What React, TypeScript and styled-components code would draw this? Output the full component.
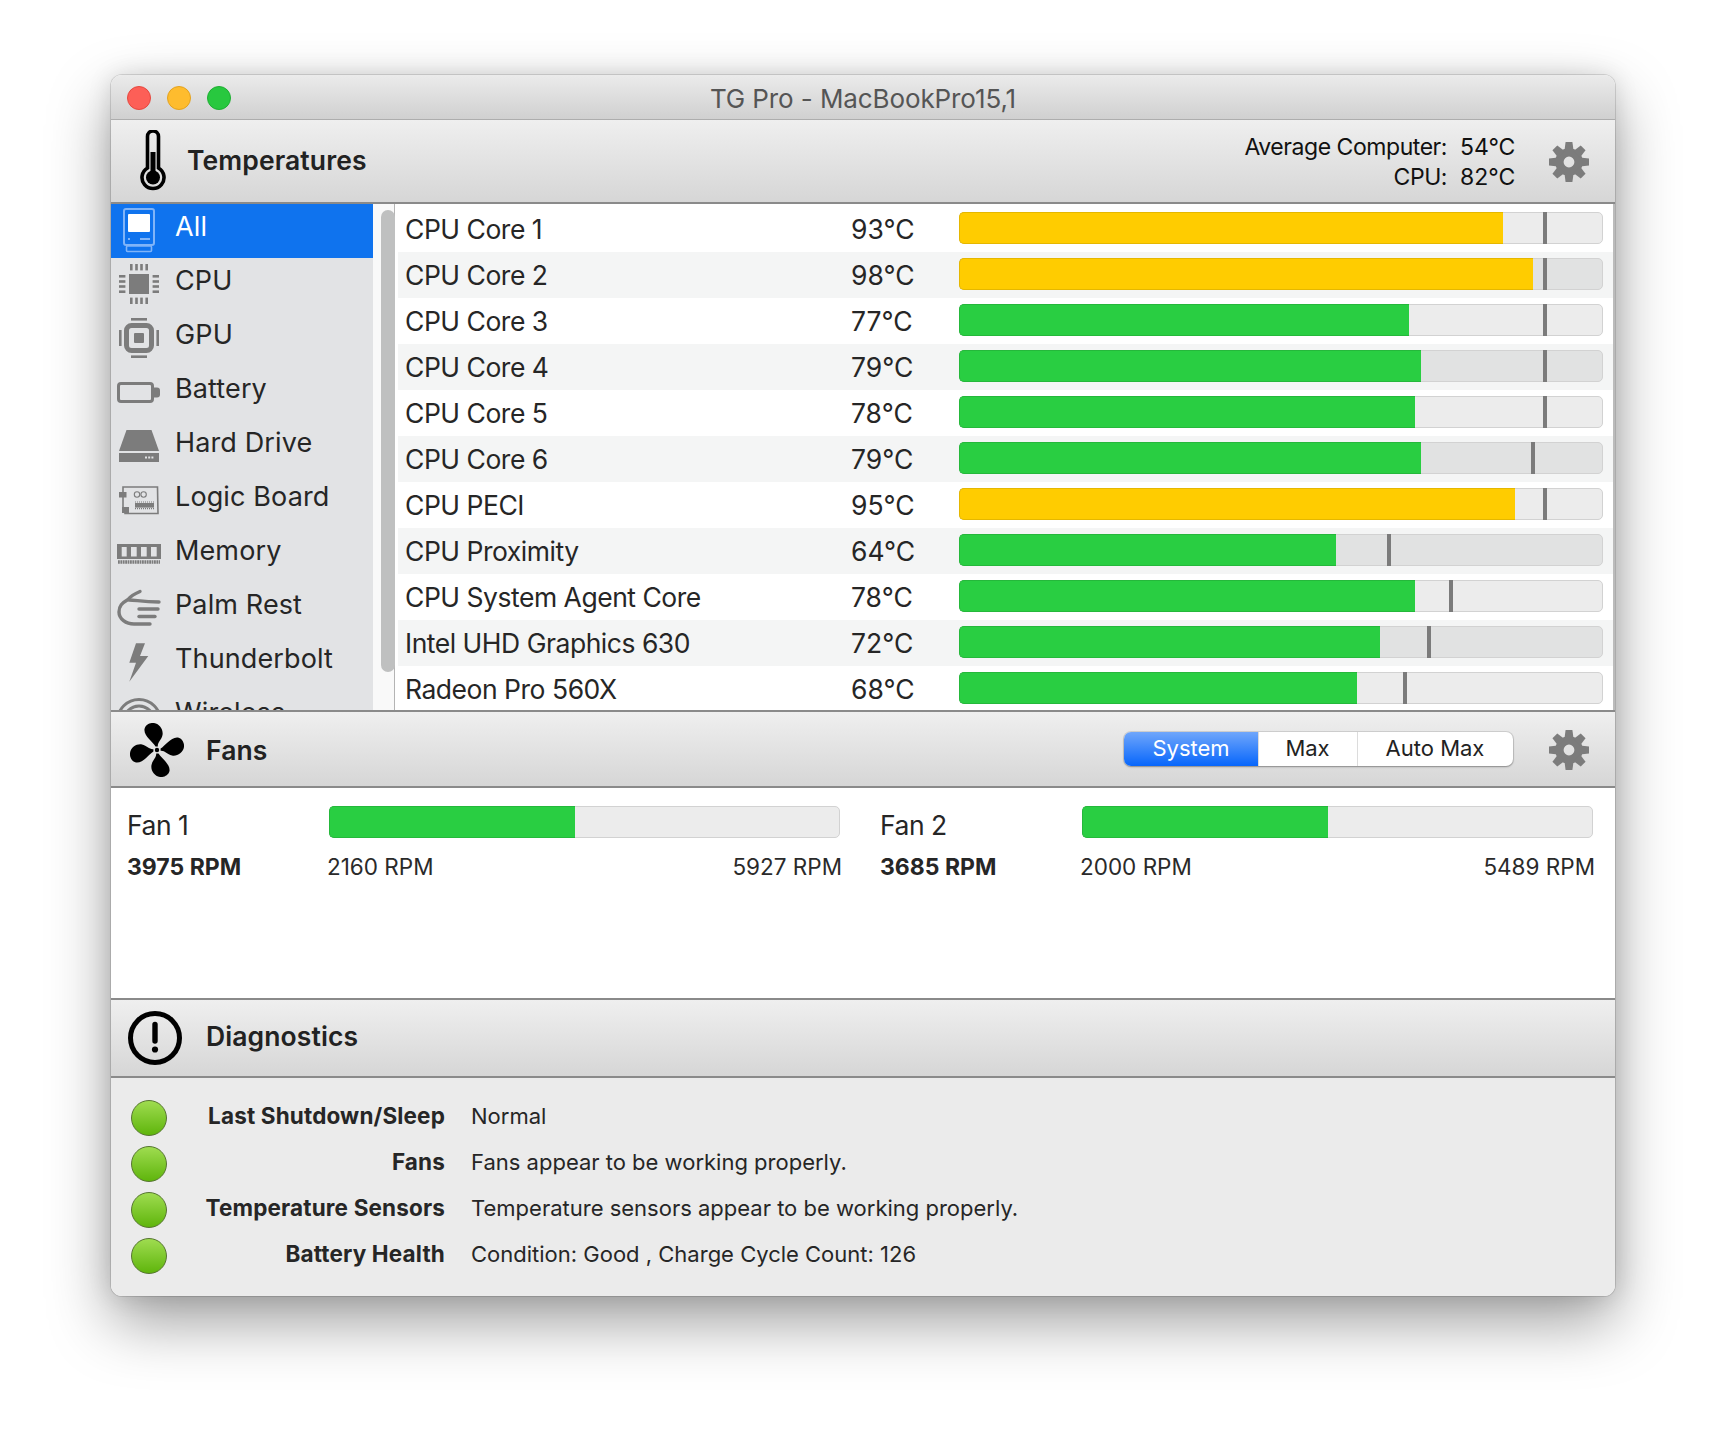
import React from 'react';
import styled, { createGlobalStyle } from 'styled-components';

const BASE_FONT = '"Inter", "Noto Sans", "Liberation Sans", sans-serif';
const ICON_GREY = '#7c7c7c';
const HEADER_LINE = '#8a8a8a';
const BAR_LEFT = 959;

const GlobalStyle = createGlobalStyle`
  html, body {
    margin: 0;
    padding: 0;
    background: #fff;
  }
  body {
    font-family: ${BASE_FONT};
    color: #242424;
    -webkit-font-smoothing: antialiased;
  }
`;

const Page = styled.div`
  width: 1726px;
  height: 1444px;
  box-sizing: border-box;
  padding: 75px 0 0 111px;
  overflow: hidden;
`;

const Window = styled.div`
  width: 1504px;
  height: 1221px;
  border-radius: 11px;
  overflow: hidden;
  display: flex;
  flex-direction: column;
  box-shadow: 0 0 0 1px rgba(0, 0, 0, 0.12), 0 26px 62px rgba(0, 0, 0, 0.38), 0 0 24px rgba(0, 0, 0, 0.12);
`;

const TitleBar = styled.div`
  height: 45px;
  box-sizing: border-box;
  flex: none;
  display: flex;
  align-items: center;
  position: relative;
  padding: 2px 0 0 16px;
  gap: 16px;
  background: linear-gradient(#ebebeb, #d0d0d0);
  border-bottom: 1px solid #adadad;
`;

const Light = styled.span<{ $color: string; $edge: string }>`
  width: 24px;
  height: 24px;
  box-sizing: border-box;
  border-radius: 50%;
  background: ${(p) => p.$color};
  border: 1px solid ${(p) => p.$edge};
`;

const WindowTitle = styled.div`
  position: absolute;
  left: 0;
  right: 0;
  top: 8px;
  text-align: center;
  font-size: 26px;
  line-height: 32px;
  letter-spacing: -0.1px;
  color: #555;
`;

const SectionHeader = styled.div<{ $height: number; $top?: boolean }>`
  height: ${(p) => p.$height}px;
  box-sizing: border-box;
  flex: none;
  display: flex;
  align-items: center;
  background: linear-gradient(#efefef, #d6d6d6);
  border-bottom: 2px solid ${HEADER_LINE};
  ${(p) => p.$top && `border-top: 2px solid ${HEADER_LINE};`}
`;

const HeaderIcon = styled.div<{ $width: number; $left: number; $down?: number }>`
  width: ${(p) => p.$width}px;
  margin-left: ${(p) => p.$left}px;
  margin-top: ${(p) => p.$down || 0}px;
  display: flex;
  flex: none;
`;

const SectionTitle = styled.div<{ $left: number; $up?: number; $down?: number }>`
  margin-left: ${(p) => p.$left}px;
  margin-bottom: ${(p) => p.$up || 0}px;
  margin-top: ${(p) => p.$down || 0}px;
  font-size: 26.5px;
  font-weight: 600;
  letter-spacing: 0.1px;
  color: #222;
`;

const Summary = styled.div`
  margin-left: auto;
  display: grid;
  grid-template-columns: auto auto;
  column-gap: 13px;
  justify-items: end;
  font-size: 23px;
  line-height: 30px;
  color: #111;
  margin-top: 2px;
`;

const SummaryLabel = styled.span`
  letter-spacing: -0.45px;
`;

const SummaryValue = styled.span`
  width: 52px;
  justify-self: start;
`;

const GearSlot = styled.div<{ $left: number; $down?: number }>`
  margin-left: ${(p) => p.$left}px;
  margin-right: 26px;
  margin-top: ${(p) => p.$down || 0}px;
  display: flex;
`;

const TempBody = styled.div`
  height: 506px;
  flex: none;
  display: flex;
  background: #fff;
  overflow: hidden;
`;

const Sidebar = styled.div`
  width: 262px;
  flex: none;
  background: #e2e3e5;
  overflow: hidden;
`;

const SideRow = styled.div<{ $active?: boolean }>`
  height: 54px;
  display: flex;
  align-items: flex-start;
  padding-left: 5px;
  gap: 13px;
  font-size: 27px;
  background: ${(p) => (p.$active ? '#0f73ee' : 'transparent')};
  color: ${(p) => (p.$active ? '#fff' : '#262626')};
`;

const SideIcon = styled.div`
  width: 46px;
  height: 46px;
  flex: none;
  margin-top: 3px;
`;

const SideLabel = styled.span`
  line-height: 46px;
  letter-spacing: 0.12px;
`;

const ScrollStrip = styled.div`
  width: 22px;
  flex: none;
  box-sizing: border-box;
  padding: 6px 0 0 8px;
  background: #f9f9f9;
  border-right: 1px solid #b4b4b4;
`;

const ScrollThumb = styled.div`
  width: 14px;
  height: 462px;
  border-radius: 7px;
  background: #bfc0c0;
`;

const Table = styled.div`
  flex: 1;
  padding: 2px 0 0 3px;
  border-right: 2px solid #bbb;
`;

const TempRow = styled.div`
  height: 46px;
  display: grid;
  grid-template-columns: 446px 108px 644px;
  padding-left: 7px;
  font-size: 26.5px;
  line-height: 46px;
  color: #262626;
  &:nth-child(even) {
    background: #f4f5f5;
  }
`;

const SensorName = styled.span`
  letter-spacing: -0.48px;
`;

const Track = styled.div<{ $flush?: boolean }>`
  position: relative;
  height: 32px;
  margin-top: ${(p) => (p.$flush ? 0 : 6)}px;
  box-sizing: border-box;
  background: rgba(0, 0, 0, 0.075);
  border: 1px solid #d2d2d2;
  border-radius: 5px;
`;

const Fill = styled.div<{ $hot?: boolean }>`
  position: absolute;
  left: -1px;
  top: -1px;
  bottom: -1px;
  box-sizing: border-box;
  background: ${(p) => (p.$hot ? '#ffcc00' : '#29ce42')};
  border: 1px solid ${(p) => (p.$hot ? '#e5b700' : '#25b83b')};
  border-right: none;
  border-radius: 5px 0 0 5px;
`;

const Mark = styled.div`
  position: absolute;
  top: -1px;
  bottom: -1px;
  width: 4px;
  background: #7b7b7b;
`;

const FanBody = styled.div`
  height: 210px;
  flex: none;
  box-sizing: border-box;
  background: #fff;
  padding: 18px 0 0 16px;
  display: grid;
  grid-template-columns: 753px 715px;
  align-items: start;
`;

const FanPanel = styled.div`
  width: 715px;
  display: grid;
  grid-template-columns: 202px 1fr;
`;

const FanName = styled.div`
  font-size: 26.5px;
  line-height: 38px;
  letter-spacing: -0.48px;
  color: #262626;
`;

const FanBar = styled.div`
  margin-right: 2px;
`;

const FanSpeed = styled.div`
  font-size: 23px;
  font-weight: 700;
  line-height: 36px;
  margin-top: 5px;
  color: #262626;
`;

const FanRange = styled.div`
  display: flex;
  justify-content: space-between;
  font-size: 22.5px;
  line-height: 36px;
  margin: 5px 0 0 -2px;
  color: #2a2a2a;
`;

const Segments = styled.div`
  margin-left: auto;
  display: flex;
  height: 34px;
  width: 389px;
  border-radius: 7px;
  overflow: hidden;
  background: #fff;
  box-shadow: 0 0 0 1px rgba(0, 0, 0, 0.1), 0 1px 2px rgba(0, 0, 0, 0.3);
  font-size: 22px;
  line-height: 32px;
  text-align: center;
`;

const Segment = styled.div<{ $width: number; $active?: boolean }>`
  width: ${(p) => p.$width}px;
  flex: none;
  color: ${(p) => (p.$active ? '#fff' : '#222')};
  background: ${(p) => (p.$active ? 'linear-gradient(#6fa6fb, #0766fb)' : 'transparent')};
  & + & {
    box-shadow: inset 1px 0 0 #dcdcdc;
  }
`;

const DiagBody = styled.div`
  flex: 1;
  box-sizing: border-box;
  background: #ebebeb;
  padding: 22px 0 0 20px;
`;

const DiagRow = styled.div`
  display: grid;
  grid-template-columns: 36px 278px 1fr;
  height: 46px;
  font-size: 22px;
  line-height: 32px;
  color: #262626;
`;

const Led = styled.div`
  width: 36px;
  height: 36px;
  box-sizing: border-box;
  border-radius: 50%;
  border: 1px solid #55752f;
  background: linear-gradient(#9fdc50, #5fb50c);
`;

const DiagLabel = styled.div`
  font-size: 22.5px;
  font-weight: 700;
  letter-spacing: 0.15px;
  text-align: right;
`;

const DiagValue = styled.div`
  margin-left: 26px;
`;

function Gear() {
  return (
    <svg width="40" height="40" viewBox="-20 -20 40 40">
      <circle r="9.6" fill="none" stroke={ICON_GREY} strokeWidth="8.4" />
      {[0, 45, 90, 135, 180, 225, 270, 315].map((a) => (
        <path key={a} d="M-3.4,-20 H3.4 L4.6,-11 H-4.6 Z" fill={ICON_GREY} transform={`rotate(${a})`} />
      ))}
    </svg>
  );
}

function Thermometer() {
  return (
    <svg width="26" height="62" viewBox="0 0 26 62">
      <path
        d="M7.5,38 V6.5 a5.5,5.5 0 0 1 11,0 V38 a11,11 0 1 1 -11,0 Z"
        fill="none"
        stroke="#000"
        strokeWidth="3.6"
      />
      <rect x="10.5" y="22" width="5" height="24" fill="#000" />
      <circle cx="13" cy="47.5" r="7" fill="#000" />
    </svg>
  );
}

function FanGlyph() {
  const blade =
    'M-1.5,-3.6 C-4,-8 -13.5,-14 -12.5,-21 C-11.5,-25.5 -6.5,-27.5 -3,-27 C3,-26 6.5,-20 5.5,-15 C4.5,-10 0.5,-8 0.8,-3.6 Z';
  return (
    <svg width="54" height="54" viewBox="-27 -27 54 54">
      {[0, 90, 180, 270].map((a) => (
        <path key={a} d={blade} fill="#000" transform={`rotate(${a})`} />
      ))}
      <circle r="2.2" fill="#000" />
    </svg>
  );
}

function AlertGlyph() {
  return (
    <svg width="54" height="54" viewBox="0 0 54 54">
      <circle cx="27" cy="27" r="24.5" fill="none" stroke="#000" strokeWidth="5" />
      <path d="M27,13.5 V30" stroke="#000" strokeWidth="5.4" strokeLinecap="round" />
      <circle cx="27" cy="38.5" r="3.1" fill="#000" />
    </svg>
  );
}

const sideIcons: Record<string, React.ReactNode> = {
  All: (
    <>
      <rect x="8" y="2" width="30" height="36" rx="2" fill="none" stroke="#80b4f8" strokeWidth="2" />
      <rect x="12" y="7" width="22" height="18" rx="1" fill="#fff" />
      <path d="M24,32 H34 M12,32 H14" stroke="#80b4f8" strokeWidth="2" />
      <rect x="10.5" y="39" width="25" height="5.5" rx="1" fill="none" stroke="#80b4f8" strokeWidth="1.6" />
    </>
  ),
  CPU: (
    <g fill={ICON_GREY}>
      <rect x="13" y="13" width="20" height="20" />
      {[14, 19.2, 24.2, 29.4].map((p) => (
        <g key={p}>
          <rect x={p} y="3" width="2.6" height="6.4" />
          <rect x={p} y="36.6" width="2.6" height="6.4" />
          <rect x="3" y={p} width="6.4" height="2.6" />
          <rect x="36.6" y={p} width="6.4" height="2.6" />
        </g>
      ))}
    </g>
  ),
  GPU: (
    <g fill={ICON_GREY}>
      <rect x="10.5" y="10.5" width="25" height="25" rx="5" fill="none" stroke={ICON_GREY} strokeWidth="5" />
      <rect x="18" y="18" width="10" height="10" rx="1" />
      <rect x="15" y="3" width="16" height="2.6" />
      <rect x="15" y="40.4" width="16" height="2.6" />
      <rect x="3" y="15" width="2.6" height="16" />
      <rect x="40.4" y="15" width="2.6" height="16" />
    </g>
  ),
  Battery: (
    <>
      <rect x="2.5" y="14.5" width="34" height="18" rx="2.5" fill="none" stroke={ICON_GREY} strokeWidth="3" />
      <path d="M38,18.5 H41 a3,3 0 0 1 3,3 V25.5 a3,3 0 0 1 -3,3 H38 Z" fill={ICON_GREY} />
    </>
  ),
  'Hard Drive': (
    <g fill={ICON_GREY}>
      <path d="M10.5,7 H35.5 L43,28 H3 Z" />
      <path
        fillRule="evenodd"
        d="M3,30 H43 V39 H3 Z M29,33.5 H31 V35.5 H29 Z M32.2,33.5 H34.2 V35.5 H32.2 Z M35.4,33.5 H37.4 V35.5 H35.4 Z"
      />
    </g>
  ),
  'Logic Board': (
    <g>
      <path d="M7,15 V10 H41.5 L42,36.5 H9 V33" fill="none" stroke={ICON_GREY} strokeWidth="1.6" />
      <path d="M7,20 V30" stroke={ICON_GREY} strokeWidth="1.6" />
      <rect x="3" y="15" width="7.5" height="5.5" fill={ICON_GREY} />
      <rect x="6" y="30" width="7" height="6" fill={ICON_GREY} />
      <circle cx="21" cy="17.5" r="2.7" fill="none" stroke={ICON_GREY} strokeWidth="1.1" />
      <circle cx="27.6" cy="17.5" r="2.7" fill="none" stroke={ICON_GREY} strokeWidth="1.1" />
      <rect x="19" y="26" width="19" height="4.6" fill={ICON_GREY} />
      <path d="M19,25 H38 M19,31.6 H38" stroke={ICON_GREY} strokeWidth="1.2" strokeDasharray="1 1" />
    </g>
  ),
  Memory: (
    <g>
      <path
        fillRule="evenodd"
        fill={ICON_GREY}
        d="M1,13 H45 V28 H1 Z M5.7,16 V25.5 H10.7 V16 Z M15,16 V25.5 H20.7 V16 Z M25,16 V25.5 H30.7 V16 Z M35,16 V25.5 H40.7 V16 Z"
      />
      <path d="M2,31 H44" stroke={ICON_GREY} strokeWidth="3.4" strokeDasharray="1.8 0.6" />
    </g>
  ),
  'Palm Rest': (
    <g fill="none" stroke={ICON_GREY} strokeWidth="3.4" strokeLinecap="round">
      <path d="M24,6.5 C18,9 14,12 12,14.5 C6,18 3,21 3,27 C3,34 10,39 18,39 H34" />
      <path d="M13,15 C20,15 26,17 43,17" />
      <path d="M23,24 H42" />
      <path d="M23,31.5 H39" />
    </g>
  ),
  Thunderbolt: <path d="M20,4.3 H29 L24,17 H32.3 L13.3,42.7 L20,23.7 H13.3 Z" fill={ICON_GREY} />,
  Wireless: (
    <g fill="none" stroke={ICON_GREY} strokeWidth="3">
      <circle cx="23" cy="28" r="21.5" />
      <circle cx="23" cy="28" r="15" />
    </g>
  ),
};

const sideItems = Object.keys(sideIcons);

interface Sensor {
  name: string;
  temp: number;
  fillEnd: number;
  mark: number;
  hot?: boolean;
}

const sensors: Sensor[] = [
  { name: 'CPU Core 1', temp: 93, fillEnd: 1503, mark: 1543, hot: true },
  { name: 'CPU Core 2', temp: 98, fillEnd: 1533, mark: 1543, hot: true },
  { name: 'CPU Core 3', temp: 77, fillEnd: 1409, mark: 1543 },
  { name: 'CPU Core 4', temp: 79, fillEnd: 1421, mark: 1543 },
  { name: 'CPU Core 5', temp: 78, fillEnd: 1415, mark: 1543 },
  { name: 'CPU Core 6', temp: 79, fillEnd: 1421, mark: 1531 },
  { name: 'CPU PECI', temp: 95, fillEnd: 1515, mark: 1543, hot: true },
  { name: 'CPU Proximity', temp: 64, fillEnd: 1336, mark: 1387 },
  { name: 'CPU System Agent Core', temp: 78, fillEnd: 1415, mark: 1449 },
  { name: 'Intel UHD Graphics 630', temp: 72, fillEnd: 1380, mark: 1427 },
  { name: 'Radeon Pro 560X', temp: 68, fillEnd: 1357, mark: 1403 },
];

const fans = [
  { name: 'Fan 1', rpm: '3975 RPM', min: '2160 RPM', max: '5927 RPM', fill: 246 },
  { name: 'Fan 2', rpm: '3685 RPM', min: '2000 RPM', max: '5489 RPM', fill: 246 },
];

const diagnostics = [
  ['Last Shutdown/Sleep', 'Normal'],
  ['Fans', 'Fans appear to be working properly.'],
  ['Temperature Sensors', 'Temperature sensors appear to be working properly.'],
  ['Battery Health', 'Condition: Good , Charge Cycle Count: 126'],
];

export default function App() {
  return (
    <Page>
      <GlobalStyle />
      <Window>
        <TitleBar>
          <Light $color="#fd5f57" $edge="#e5483f" />
          <Light $color="#febc2e" $edge="#e3a21f" />
          <Light $color="#28c83f" $edge="#1fae33" />
          <WindowTitle>TG Pro - MacBookPro15,1</WindowTitle>
        </TitleBar>

        <SectionHeader $height={84}>
          <HeaderIcon $width={26} $left={29}>
            <Thermometer />
          </HeaderIcon>
          <SectionTitle $left={21} $up={2}>
            Temperatures
          </SectionTitle>
          <Summary>
            <SummaryLabel>Average Computer:</SummaryLabel>
            <SummaryValue>54°C</SummaryValue>
            <SummaryLabel>CPU:</SummaryLabel>
            <SummaryValue>82°C</SummaryValue>
          </Summary>
          <GearSlot $left={37} $down={2}>
            <Gear />
          </GearSlot>
        </SectionHeader>

        <TempBody>
          <Sidebar>
            {sideItems.map((item, i) => (
              <SideRow key={item} $active={i === 0}>
                <SideIcon>
                  <svg width="46" height="46" viewBox="0 0 46 46">
                    {sideIcons[item]}
                  </svg>
                </SideIcon>
                <SideLabel>{item}</SideLabel>
              </SideRow>
            ))}
          </Sidebar>
          <ScrollStrip>
            <ScrollThumb />
          </ScrollStrip>
          <Table>
            {sensors.map((s) => (
              <TempRow key={s.name}>
                <SensorName>{s.name}</SensorName>
                <span>{s.temp}°C</span>
                <Track>
                  <Fill $hot={s.hot} style={{ width: s.fillEnd - BAR_LEFT }} />
                  <Mark style={{ left: s.mark - BAR_LEFT - 1 }} />
                </Track>
              </TempRow>
            ))}
          </Table>
        </TempBody>

        <SectionHeader $height={78} $top>
          <HeaderIcon $width={54} $left={19} $down={2}>
            <FanGlyph />
          </HeaderIcon>
          <SectionTitle $left={22} $down={2}>
            Fans
          </SectionTitle>
          <Segments>
            <Segment $width={134} $active>
              System
            </Segment>
            <Segment $width={99}>Max</Segment>
            <Segment $width={156}>Auto Max</Segment>
          </Segments>
          <GearSlot $left={36} $down={2}>
            <Gear />
          </GearSlot>
        </SectionHeader>

        <FanBody>
          {fans.map((f) => (
            <FanPanel key={f.name}>
              <FanName>{f.name}</FanName>
              <FanBar>
                <Track $flush>
                  <Fill style={{ width: f.fill }} />
                </Track>
              </FanBar>
              <FanSpeed>{f.rpm}</FanSpeed>
              <FanRange>
                <span>{f.min}</span>
                <span>{f.max}</span>
              </FanRange>
            </FanPanel>
          ))}
        </FanBody>

        <SectionHeader $height={80} $top>
          <HeaderIcon $width={54} $left={17}>
            <AlertGlyph />
          </HeaderIcon>
          <SectionTitle $left={24} $up={4}>
            Diagnostics
          </SectionTitle>
        </SectionHeader>

        <DiagBody>
          {diagnostics.map(([label, value]) => (
            <DiagRow key={label}>
              <Led />
              <DiagLabel>{label}</DiagLabel>
              <DiagValue>{value}</DiagValue>
            </DiagRow>
          ))}
        </DiagBody>
      </Window>
    </Page>
  );
}
